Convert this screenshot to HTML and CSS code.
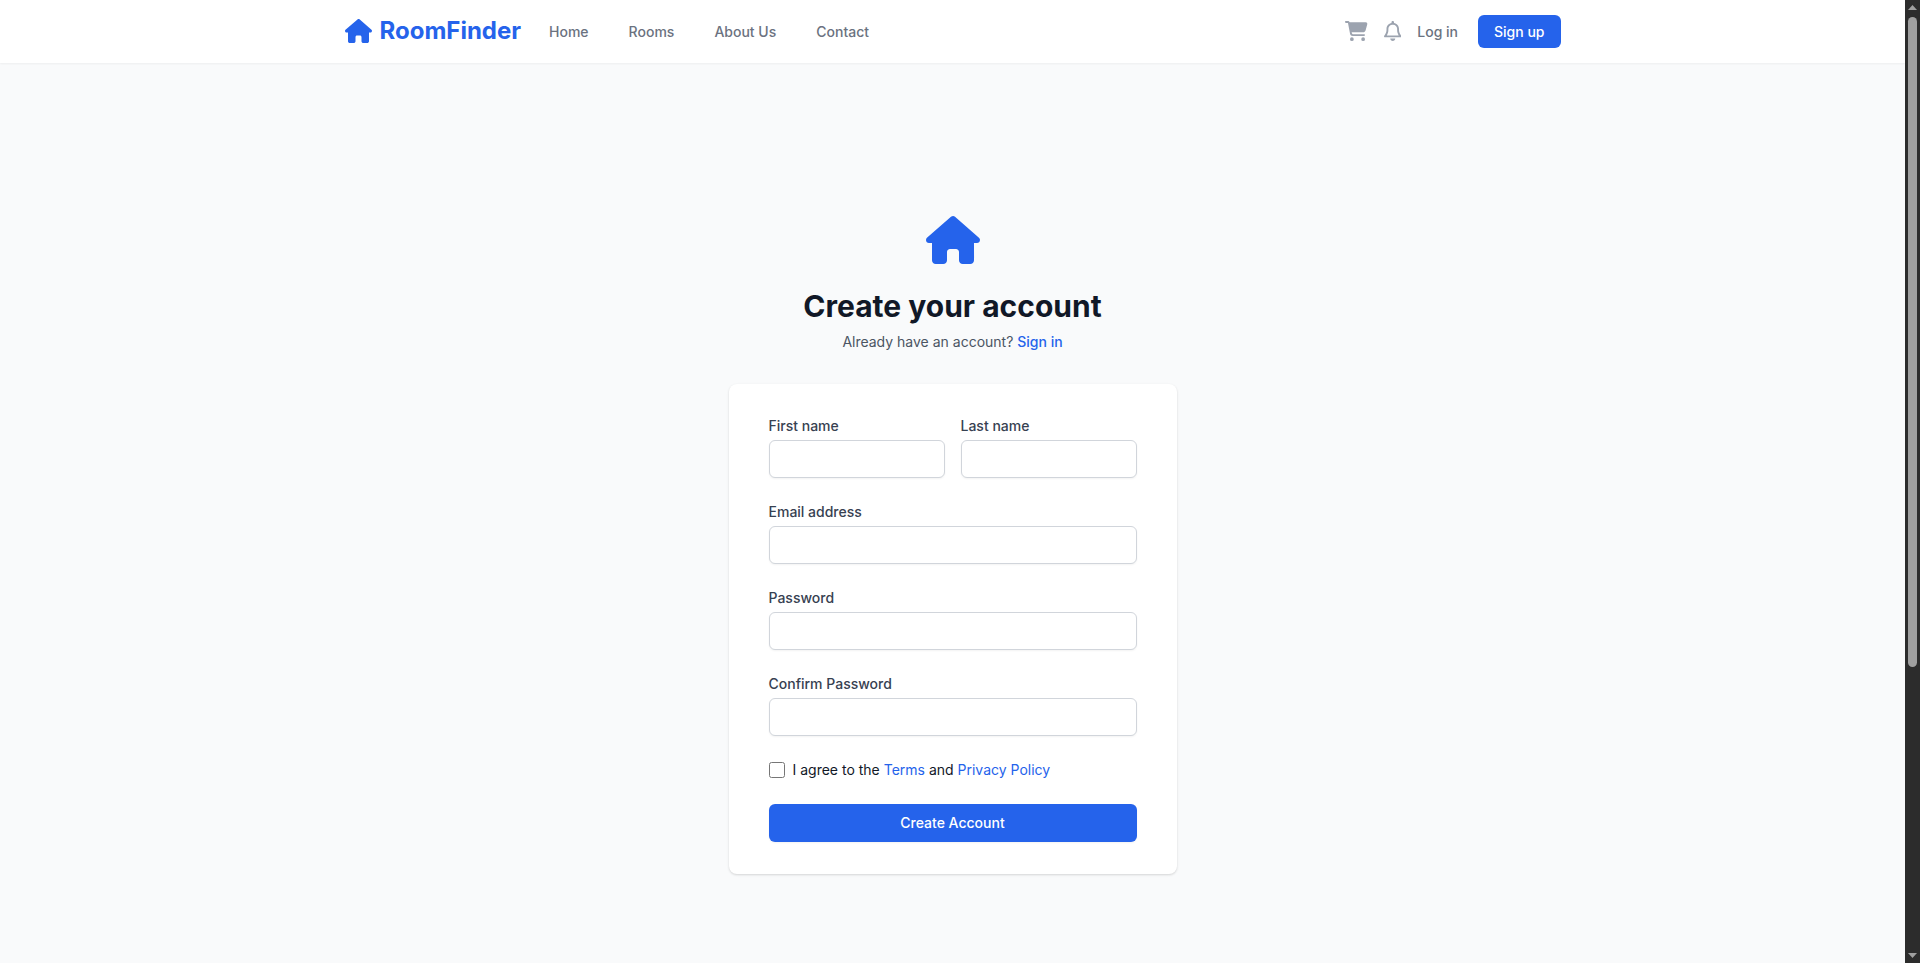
FILE: index.html
```html
<!DOCTYPE html>
<html lang="en">
<head>
  <meta charset="UTF-8">
  <meta name="viewport" content="width=device-width, initial-scale=1.0">
  <title>Sign up - RoomFinder</title>
  <link rel="stylesheet" href="styles.css">
</head>
<body>

  <div class="page">
    <nav class="navbar">
      <div class="navbar-inner">
        <a href="#" class="logo">
          <svg class="logo-icon" viewBox="0 0 576 512" aria-hidden="true"><use href="#house"/></svg>
          RoomFinder
        </a>
        <div class="nav-links">
          <a href="#">Home</a>
          <a href="#">Rooms</a>
          <a href="#">About Us</a>
          <a href="#">Contact</a>
        </div>
        <div class="nav-actions">
          <a href="#" class="icon-link" aria-label="Cart">
            <svg class="cart-icon" viewBox="0 0 576 512"><path d="M0 24C0 10.7 10.7 0 24 0H69.5c22 0 41.5 12.8 50.6 32h411c26.3 0 45.5 25 38.6 50.4l-41 152.3c-8.5 31.4-37 53.3-69.5 53.3H170.7l5.4 28.5c2.2 11.3 12.1 19.5 23.6 19.5H488c13.3 0 24 10.7 24 24s-10.7 24-24 24H199.7c-34.6 0-64.3-24.6-70.7-58.5L77.4 54.5c-.7-3.8-4-6.5-7.9-6.5H24C10.7 48 0 37.3 0 24zM128 464a48 48 0 1 1 96 0 48 48 0 1 1 -96 0zm336-48a48 48 0 1 1 0 96 48 48 0 1 1 0-96z"/></svg>
          </a>
          <a href="#" class="icon-link" aria-label="Notifications">
            <svg class="bell-icon" viewBox="0 0 448 512"><path d="M224 0c-17.7 0-32 14.3-32 32V49.9C119.5 61.4 64 124.2 64 200v33.4c0 45.4-15.5 89.5-43.8 124.9L5.3 377c-5.8 7.2-6.9 17.1-2.9 25.4S14.8 416 24 416H424c9.2 0 17.6-5.3 21.6-13.6s2.9-18.2-2.9-25.4l-14.9-18.6C399.5 322.9 384 278.8 384 233.4V200c0-75.8-55.5-138.6-128-150.1V32c0-17.7-14.3-32-32-32zm0 96h8c57.4 0 104 46.6 104 104v33.4c0 47.9 13.9 94.6 39.7 134.6H72.3C98.1 328 112 281.3 112 233.4V200c0-57.4 46.6-104 104-104h8zm64 352H224 160c0 17 6.7 33.3 18.7 45.3s28.3 18.7 45.3 18.7s33.3-6.7 45.3-18.7s18.7-28.3 18.7-45.3z"/></svg>
          </a>
          <a href="#" class="login">Log in</a>
          <a href="#" class="signup">Sign up</a>
        </div>
      </div>
    </nav>

    <main>
      <div class="register">
        <svg class="register-icon" viewBox="0 0 576 512" aria-hidden="true"><path id="house" d="M575.8 255.5c0 18-15 32.1-32 32.1h-32l.7 160.2c0 2.7-.2 5.4-.5 8.1V472c0 22.1-17.9 40-40 40H456c-1.1 0-2.2 0-3.3-.1c-1.4 .1-2.8 .1-4.2 .1H416 392c-22.1 0-40-17.9-40-40V448 384c0-17.7-14.3-32-32-32H256c-17.7 0-32 14.3-32 32v64 24c0 22.1-17.9 40-40 40H160 128.1c-1.5 0-3-.1-4.5-.2c-1.2 .1-2.4 .2-3.6 .2H104c-22.1 0-40-17.9-40-40V360c0-.9 0-1.9 .1-2.8V287.6H32c-18 0-32-14-32-32.1c0-9 3-17 10-24L266.4 8c7-7 15-8 22-8s15 2 21 7L564.8 231.5c8 7 12 15 11 24z"/></svg>
        <h2>Create your account</h2>
        <p>Already have an account? <a href="#">Sign in</a></p>

        <form class="card">
          <div class="name-row">
            <div class="field">
              <label for="first-name">First name</label>
              <input type="text" id="first-name" name="first-name" required>
            </div>
            <div class="field">
              <label for="last-name">Last name</label>
              <input type="text" id="last-name" name="last-name" required>
            </div>
          </div>
          <div class="field">
            <label for="email">Email address</label>
            <input type="email" id="email" name="email" required>
          </div>
          <div class="field">
            <label for="password">Password</label>
            <input type="password" id="password" name="password" required>
          </div>
          <div class="field">
            <label for="confirm-password">Confirm Password</label>
            <input type="password" id="confirm-password" name="confirm-password" required>
          </div>
          <div class="terms">
            <input type="checkbox" id="terms" name="terms" required>
            <label for="terms">I agree to the <a href="#">Terms</a> and <a href="#">Privacy Policy</a></label>
          </div>
          <button type="submit">Create Account</button>
        </form>
      </div>
    </main>
  </div>

  <div class="scrollbar" aria-hidden="true">
    <svg class="arrow" viewBox="0 0 15 17"><path d="M7.5 5L12 10H3z"/></svg>
    <div class="track"><div class="thumb"></div></div>
    <svg class="arrow" viewBox="0 0 15 17"><path d="M3 7h9L7.5 12z"/></svg>
  </div>

</body>
</html>
```
FILE: styles.css
```css
* {
  box-sizing: border-box;
}

body {
  margin: 0;
  height: 100vh;
  display: flex;
  overflow: hidden;
  background: #f9fafb;
  color: #111827;
  font-family: Inter, sans-serif;
  font-size: 14px;
  line-height: 20px;
}

a {
  color: #2563eb;
  text-decoration: none;
}

svg {
  display: block;
  fill: currentColor;
}

.page {
  flex: 1;
  overflow: hidden;
}

/* Navbar */
.navbar {
  position: relative;
  background: #fff;
  box-shadow: 0 1px 2px rgba(0, 0, 0, 0.05);
}

.navbar-inner {
  max-width: 1280px;
  height: 63px;
  margin: 0 auto;
  padding: 0 32px;
  display: flex;
  align-items: center;
}

.logo {
  display: flex;
  align-items: center;
  gap: 8px;
  font-size: 24px;
  line-height: 32px;
  font-weight: 700;
  padding-bottom: 2px;
}

.logo-icon {
  height: 24px;
  width: 27px;
}

.nav-links {
  display: flex;
  gap: 40px;
  margin-left: 28px;
}

.nav-links a,
.login {
  color: #6b7280;
  font-weight: 500;
}

.nav-actions {
  display: flex;
  align-items: center;
  gap: 16px;
  margin-left: auto;
}

.icon-link {
  color: #9ca3af;
  padding-bottom: 2px;
}

.cart-icon,
.bell-icon {
  height: 20px;
}

.signup {
  margin-left: 4px;
  padding: 8px 16px;
  border-radius: 6px;
  background: #2563eb;
  color: #fff;
  font-weight: 500;
  line-height: 17px;
}

/* Register form */
main {
  min-height: 100vh;
  padding: 48px 32px;
  display: flex;
  align-items: center;
  justify-content: center;
}

.register {
  width: 100%;
  max-width: 448px;
  text-align: center;
}

.register-icon {
  height: 48px;
  margin: 0 auto;
  color: #2563eb;
}

.register h2 {
  margin: 24px 0 0;
  font-size: 30px;
  line-height: 36px;
  font-weight: 700;
}

.register p {
  margin: 8px 0 0;
  color: #4b5563;
}

.register p a {
  font-weight: 500;
}

.card {
  margin-top: 32px;
  padding: 32px 40px;
  display: flex;
  flex-direction: column;
  gap: 24px;
  background: #fff;
  border-radius: 8px;
  box-shadow: 0 1px 3px rgba(0, 0, 0, 0.1), 0 1px 2px rgba(0, 0, 0, 0.06);
  text-align: left;
}

.name-row {
  display: grid;
  grid-template-columns: 1fr 1fr;
  gap: 16px;
}

.field label {
  display: block;
  color: #374151;
  font-weight: 500;
}

.field input {
  display: block;
  width: 100%;
  height: 38px;
  margin-top: 4px;
  padding: 8px 12px;
  border: 1px solid #d1d5db;
  border-radius: 6px;
  background: #fff;
  box-shadow: 0 1px 2px rgba(0, 0, 0, 0.05);
  font: inherit;
}

.terms {
  display: flex;
  align-items: center;
  gap: 8px;
}

.terms input {
  width: 16px;
  height: 16px;
  margin: 0;
}

.card button {
  height: 38px;
  border: none;
  border-radius: 6px;
  background: #2563eb;
  color: #fff;
  font: inherit;
  font-weight: 500;
  box-shadow: 0 1px 2px rgba(0, 0, 0, 0.05);
}

/* Scrollbar */
.scrollbar {
  width: 15px;
  display: flex;
  flex-direction: column;
  background: #2c2c2c;
  color: #9f9f9f;
}

.arrow {
  height: 17px;
}

.track {
  flex: 1;
  padding: 0 3px;
}

.thumb {
  height: 70%;
  border-radius: 5px;
  background: #9f9f9f;
}
```
